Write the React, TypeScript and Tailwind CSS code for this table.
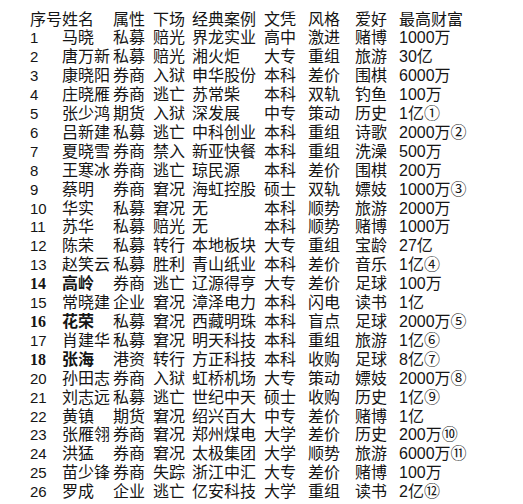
const rows: [string, string, string, string, string, string, string, string, string, boolean?][] = [
  ['1', '马晓', '私募', '赔光', '界龙实业', '高中', '激进', '赌博', '1000万'],
  ['2', '唐万新', '私募', '赔光', '湘火炬', '大专', '重组', '旅游', '30亿'],
  ['3', '康晓阳', '券商', '入狱', '申华股份', '本科', '差价', '围棋', '6000万'],
  ['4', '庄晓雁', '券商', '逃亡', '苏常柴', '本科', '双轨', '钓鱼', '100万'],
  ['5', '张少鸿', '期货', '入狱', '深发展', '中专', '策动', '历史', '1亿①'],
  ['6', '吕新建', '私募', '逃亡', '中科创业', '本科', '重组', '诗歌', '2000万②'],
  ['7', '夏晓雪', '券商', '禁入', '新亚快餐', '本科', '重组', '洗澡', '500万'],
  ['8', '王寒冰', '券商', '逃亡', '琼民源', '本科', '差价', '围棋', '200万'],
  ['9', '蔡明', '券商', '窘况', '海虹控股', '硕士', '双轨', '嫖妓', '1000万③'],
  ['10', '华实', '私募', '窘况', '无', '本科', '顺势', '旅游', '2000万'],
  ['11', '苏华', '私募', '赔光', '无', '本科', '顺势', '赌博', '1000万'],
  ['12', '陈荣', '私募', '转行', '本地板块', '大专', '重组', '宝龄', '27亿'],
  ['13', '赵笑云', '私募', '胜利', '青山纸业', '本科', '差价', '音乐', '1亿④'],
  ['14', '高岭', '券商', '逃亡', '辽源得亨', '大专', '差价', '足球', '100万', true],
  ['15', '常晓建', '企业', '窘况', '漳泽电力', '本科', '闪电', '读书', '1亿'],
  ['16', '花荣', '私募', '窘况', '西藏明珠', '本科', '盲点', '足球', '2000万⑤', true],
  ['17', '肖建华', '私募', '窘况', '明天科技', '本科', '重组', '旅游', '1亿⑥'],
  ['18', '张海', '港资', '转行', '方正科技', '本科', '收购', '足球', '8亿⑦', true],
  ['20', '孙田志', '券商', '入狱', '虹桥机场', '大专', '策动', '嫖妓', '2000万⑧'],
  ['21', '刘志远', '私募', '逃亡', '世纪中天', '硕士', '收购', '历史', '1亿⑨'],
  ['22', '黄镇', '期货', '窘况', '绍兴百大', '中专', '差价', '赌博', '1亿'],
  ['23', '张雁翎', '券商', '窘况', '郑州煤电', '大学', '差价', '历史', '200万⑩'],
  ['24', '洪猛', '券商', '窘况', '太极集团', '大学', '顺势', '旅游', '6000万⑪'],
  ['25', '苗少锋', '券商', '失踪', '浙江中汇', '大专', '差价', '赌博', '100万'],
  ['26', '罗成', '企业', '逃亡', '亿安科技', '大学', '重组', '读书', '2亿⑫'],
];

const cols = 'grid grid-cols-[32px_51px_40px_39px_72px_44px_47px_44px_1fr]';

export default function App() {
  return (
    <div
      className="w-[523px] h-[504px] overflow-hidden bg-white pl-[30px] pt-[10.5px] text-[16px] leading-[18.9px] text-[#151515]"
      style={{ fontFamily: '"Liberation Sans", "Noto Sans CJK SC", sans-serif' }}
    >
      <div className={cols}>
        <span>序号</span>
        <span>姓名</span>
        <span>属性</span>
        <span>下场</span>
        <span>经典案例</span>
        <span>文凭</span>
        <span>风格</span>
        <span>爱好</span>
        <span>最高财富</span>
      </div>
      {rows.map((r) => (
        <div key={r[0]} className={cols}>
          {r[9] ? (
            <span className="font-bold" style={{ fontFamily: '"Liberation Serif", serif' }}>{r[0]}</span>
          ) : (
            <span className="text-[15px]">{r[0]}</span>
          )}
          <span className={r[9] ? 'font-bold' : ''}>{r[1]}</span>
          <span>{r[2]}</span>
          <span>{r[3]}</span>
          <span>{r[4]}</span>
          <span>{r[5]}</span>
          <span>{r[6]}</span>
          <span>{r[7]}</span>
          <span className="whitespace-nowrap">{r[8]}</span>
        </div>
      ))}
    </div>
  );
}
